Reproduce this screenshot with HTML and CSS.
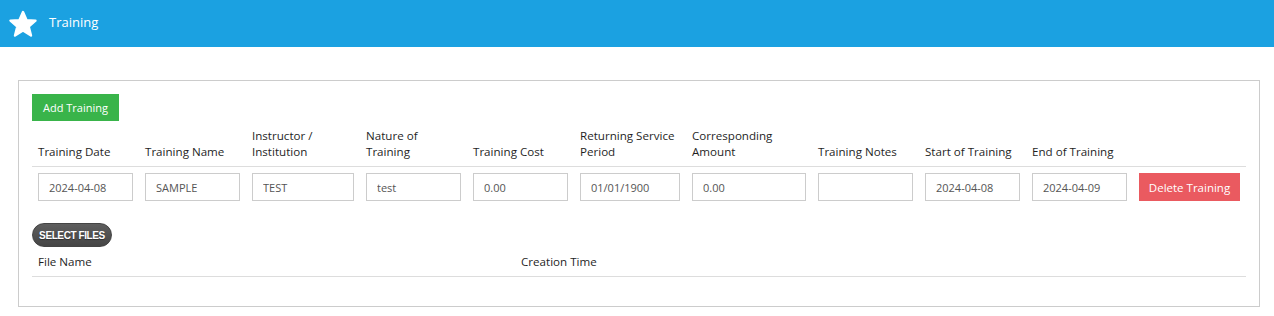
FILE: index.html
```html
<!DOCTYPE html>
<html lang="en">
<head>
<meta charset="utf-8">
<title>Training</title>
<link rel="stylesheet" href="styles.css">
</head>
<body>
<header class="topbar">
  <svg class="star" width="30" height="30" viewBox="0 0 30 30" aria-hidden="true">
    <polygon points="15,3 18.6,11.2 27.5,11.6 20.7,17.5 23,26.6 15,21.6 7,26.6 9.3,17.5 2.5,11.6 11.4,11.2" fill="#fff" stroke="#fff" stroke-width="2.4" stroke-linejoin="round"/>
  </svg>
  <span class="title">Training</span>
</header>

<section class="panel">
  <div class="toolbar">
    <button class="btn btn-add" type="button">Add Training</button>
  </div>
  <table class="grid">
    <colgroup>
      <col class="c107"><col class="c107"><col class="c114"><col class="c107"><col class="c107"><col class="c112"><col class="c126"><col class="c107"><col class="c107"><col class="c107"><col class="c113">
    </colgroup>
    <thead>
      <tr>
        <th>Training Date</th>
        <th>Training Name</th>
        <th>Instructor /<br>Institution</th>
        <th>Nature of<br>Training</th>
        <th>Training Cost</th>
        <th>Returning Service<br>Period</th>
        <th>Corresponding<br>Amount</th>
        <th>Training Notes</th>
        <th>Start of Training</th>
        <th>End of Training</th>
        <th></th>
      </tr>
    </thead>
    <tbody>
      <tr>
        <td><input class="field" type="text" value="2024-04-08"></td>
        <td><input class="field" type="text" value="SAMPLE"></td>
        <td><input class="field" type="text" value="TEST"></td>
        <td><input class="field" type="text" value="test"></td>
        <td><input class="field" type="text" value="0.00"></td>
        <td><input class="field" type="text" value="01/01/1900"></td>
        <td><input class="field" type="text" value="0.00"></td>
        <td><input class="field" type="text" value=""></td>
        <td><input class="field" type="text" value="2024-04-08"></td>
        <td><input class="field" type="text" value="2024-04-09"></td>
        <td><button class="btn btn-delete" type="button">Delete Training</button></td>
      </tr>
    </tbody>
  </table>

  <button class="pill" type="button">SELECT FILES</button>

  <table class="files">
    <colgroup><col class="c483"><col></colgroup>
    <thead>
      <tr><th>File Name</th><th>Creation Time</th></tr>
    </thead>
    <tbody></tbody>
  </table>
</section>
</body>
</html>
```

FILE: styles.css
```css
* { box-sizing: border-box; }

body {
  margin: 0;
  font-family: "Open Sans", "Liberation Sans", sans-serif;
  color: #333;
  background: #fff;
}

.topbar {
  height: 47px;
  background: #1ba1e1;
  display: flex;
  align-items: center;
  padding-left: 8px;
  gap: 11px;
}

.star { display: block; margin-top: 1px; }

.title {
  color: #fff;
  font-size: 13px;
  line-height: 18px;
  margin-top: -3px;
}

.panel {
  margin: 33px 14px 0 18px;
  border: 1px solid #ccc;
  padding: 13px;
}

.toolbar { display: flex; }

.btn {
  font-family: inherit;
  font-size: 11px;
  color: #fff;
  border: 0;
  border-radius: 0;
  cursor: pointer;
  line-height: 15px;
}

.btn-add {
  background: #39b44a;
  height: 27px;
  padding: 0 11px;
}

.btn-delete {
  background: #ea5a60;
  height: 28px;
  width: 101px;
  padding: 0;
  font-size: 11.5px;
  display: block;
}

.grid, .files {
  width: 100%;
  border-collapse: collapse;
  table-layout: fixed;
}

.c107 { width: 107px; }
.c112 { width: 112px; }
.c113 { width: 113px; }
.c114 { width: 114px; }
.c126 { width: 126px; }
.c483 { width: 483px; }

.grid th, .files th {
  text-align: left;
  vertical-align: bottom;
  font-size: 11.6px;
  font-weight: 400;
  line-height: 16px;
  color: #1f1f1f;
  padding: 7px 6px 6px 6px;
  border-bottom: 1px solid #ddd;
}

.grid td {
  padding: 6px;
  vertical-align: middle;
}

.grid { margin-bottom: 16px; }

.field {
  display: block;
  width: 100%;
  height: 28px;
  border: 1px solid #ccc;
  border-radius: 0;
  padding: 0 10px;
  font-family: inherit;
  font-size: 11px;
  color: #555;
  background: #fff;
}

.pill {
  display: block;
  width: 80px;
  height: 24px;
  border-radius: 12px;
  border: 1px solid #444;
  background: linear-gradient(#5e5e5e, #454545);
  color: #fff;
  font-family: "Liberation Sans", Arial, sans-serif;
  font-weight: 700;
  font-size: 10px;
  letter-spacing: -0.4px;
  padding: 0;
  text-shadow: 0 1px 1px rgba(0,0,0,0.4);
}

.files { margin-bottom: 16px; }
```
